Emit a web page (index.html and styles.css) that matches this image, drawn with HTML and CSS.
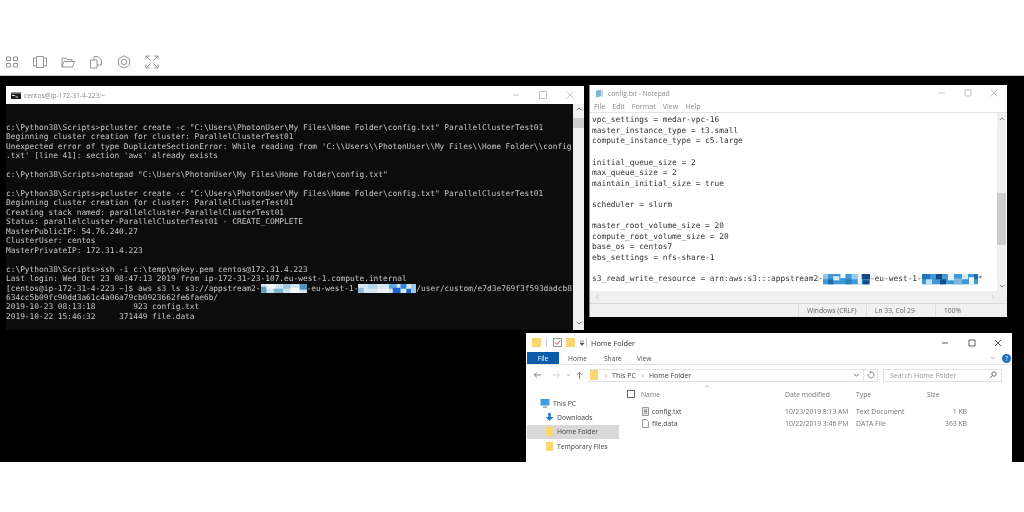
FILE: index.html
```html
<!DOCTYPE html>
<html lang="en">
<head>
<meta charset="utf-8">
<title>AppStream session</title>
<link rel="stylesheet" href="styles.css">
</head>
<body>
<svg class="defs" width="0" height="0" aria-hidden="true">
  <symbol id="r1" viewBox="0 0 50 10" preserveAspectRatio="none">
    <rect width="50" height="10" fill="#cfe4ee"/><rect x="0" y="3" width="6" height="7" fill="#5f9fc4"/><rect x="6" y="0" width="10" height="5" fill="#f2f7fa"/><rect x="14" y="5" width="10" height="5" fill="#7fb3d0"/><rect x="24" y="0" width="8" height="5" fill="#9cc6dc"/><rect x="32" y="4" width="10" height="6" fill="#f4f8fa"/><rect x="42" y="0" width="8" height="6" fill="#4f94c6"/>
  </symbol>
  <symbol id="r2" viewBox="0 0 60 10" preserveAspectRatio="none">
    <rect width="60" height="10" fill="#d6e7f0"/><rect x="0" y="4" width="6" height="6" fill="#8fbfda"/><rect x="10" y="0" width="10" height="5" fill="#b7d6e8"/><rect x="20" y="5" width="12" height="5" fill="#edf4f8"/><rect x="32" y="0" width="8" height="5" fill="#5aa4e0"/><rect x="36" y="4" width="8" height="6" fill="#1a63d6"/><rect x="44" y="0" width="6" height="5" fill="#2f86e0"/><rect x="50" y="5" width="5" height="5" fill="#1a63d6"/><rect x="55" y="0" width="5" height="10" fill="#9cc8ea"/>
  </symbol>
  <symbol id="r3" viewBox="0 0 46 10" preserveAspectRatio="none">
    <rect width="46" height="10" fill="#3f97d6"/><rect x="0" y="0" width="5" height="5" fill="#8cc4e6"/><rect x="5" y="5" width="5" height="5" fill="#1f6aa8"/><rect x="10" y="2" width="6" height="4" fill="#d5e9f5"/><rect x="17" y="0" width="5" height="4" fill="#e9f4fa"/><rect x="22" y="5" width="6" height="5" fill="#2a7fc0"/><rect x="28" y="0" width="6" height="5" fill="#9bcdea"/><rect x="34" y="0" width="4" height="10" fill="#e6f2f9"/><rect x="38" y="0" width="8" height="5" fill="#124a86"/><rect x="39" y="6" width="6" height="4" fill="#124a86"/>
  </symbol>
  <symbol id="r4" viewBox="0 0 56 10" preserveAspectRatio="none">
    <rect width="56" height="10" fill="#3f97d6"/><rect x="0" y="0" width="8" height="5" fill="#1f78bd"/><rect x="4" y="5" width="6" height="5" fill="#bfe0f2"/><rect x="14" y="0" width="6" height="5" fill="#124a86"/><rect x="18" y="5" width="6" height="5" fill="#154f8c"/><rect x="26" y="0" width="6" height="6" fill="#e4f1f8"/><rect x="32" y="4" width="8" height="6" fill="#7ab8de"/><rect x="40" y="0" width="6" height="5" fill="#d8ebf5"/><rect x="47" y="3" width="5" height="7" fill="#e9f4fa"/><rect x="52" y="0" width="4" height="5" fill="#1d70b4"/>
  </symbol>
</svg>

<header class="toolbar">
  <svg class="tool" viewBox="0 0 14 14"><path d="M1.500 2h4v3.500h-4zM8.500 2h4v3.500h-4zM1.500 8.500h4v3.500h-4zM8.500 8.500h4v3.500h-4z"/></svg>
  <svg class="tool" viewBox="0 0 14 14"><path d="M3.500 1.500h7v11h-7zM3.500 3H.5v8h3M10.500 3h3v8h-3"/></svg>
  <svg class="tool" viewBox="0 0 14 14"><path d="M1 12V3h4l1 1.500h5V6.500M1 12l2-5.500h10.500L11.500 12z"/></svg>
  <svg class="tool" viewBox="0 0 14 14"><path d="M1.500 5h6.500v8H1.500zM5 5V1.500h4l3.500 3.500v5H8"/></svg>
  <svg class="tool" viewBox="0 0 14 14"><path d="M7 .8l5.500 3.100v6.200L7 13.200l-5.500-3.100V3.900z"/><circle cx="7" cy="7" r="2.700"/></svg>
  <svg class="tool" viewBox="0 0 14 14"><path d="M1 1l4.500 4.500M13 1L8.500 5.500M1 13l4.500-4.500M13 13L8.500 8.500M1 4.500V1h3.500M9.500 1H13v3.500M1 9.500V13h3.500M13 9.500V13H9.500"/></svg>
</header>

<main class="desktop">
  <section class="window terminal">
    <div class="titlebar term-title">
      <svg class="cmd-icon" viewBox="0 0 10 7"><rect width="10" height="7" fill="#1c1c1c"/><rect width="10" height="1.500" fill="#9a9a9a"/><rect x="1" y="3" width="3" height="1" fill="#ddd"/><rect x="4.500" y="4.500" width="2.500" height="1" fill="#ddd"/></svg>
      <span class="title-text">centos@ip-172-31-4-223:~</span>
      <div class="controls faint">
        <svg viewBox="0 0 8 8"><path d="M1 4h6"/></svg>
        <svg viewBox="0 0 8 8"><path d="M.5.500h7v7h-7z"/></svg>
        <svg viewBox="0 0 8 8"><path d="M.5.500l7 7M7.500.500l-7 7"/></svg>
      </div>
    </div>
    <div class="term-body">
      <div class="console">
<pre class="block">c:\Python38\Scripts&gt;pcluster create -c "C:\Users\PhotonUser\My Files\Home Folder\config.txt" ParallelClusterTest01
Beginning cluster creation for cluster: ParallelClusterTest01
Unexpected error of type DuplicateSectionError: While reading from 'C:\\Users\\PhotonUser\\My Files\\Home Folder\\config
.txt' [line 41]: section 'aws' already exists

c:\Python38\Scripts&gt;notepad "C:\Users\PhotonUser\My Files\Home Folder\config.txt"

c:\Python38\Scripts&gt;pcluster create -c "C:\Users\PhotonUser\My Files\Home Folder\config.txt" ParallelClusterTest01
Beginning cluster creation for cluster: ParallelClusterTest01
Creating stack named: parallelcluster-ParallelClusterTest01
Status: parallelcluster-ParallelClusterTest01 - CREATE_COMPLETE
MasterPublicIP: 54.76.240.27
ClusterUser: centos
MasterPrivateIP: 172.31.4.223

c:\Python38\Scripts&gt;ssh -i c:\temp\mykey.pem centos@172.31.4.223
Last login: Wed Oct 23 08:47:13 2019 from ip-172-31-23-107.eu-west-1.compute.internal</pre>
<div class="redact-line"><span>[centos@ip-172-31-4-223 ~]$ aws s3 ls s3://appstream2-</span><svg class="redact rt1"><use href="#r1"/></svg><span>-eu-west-1-</span><svg class="redact rt2"><use href="#r2"/></svg><span>/user/custom/e7d3e769f3f593dadcb8</span></div>
<pre class="block">634cc5b09fc90dd3a61c4a06a79cb0923662fe6fae6b/
2019-10-23 08:13:18        923 config.txt
2019-10-22 15:46:32     371449 file.data</pre>
      </div>
      <div class="vscroll term-scroll">
        <svg class="arrow" viewBox="0 0 8 5"><path d="M1 4l3-3 3 3"/></svg>
        <div class="thumb term-thumb"></div>
        <svg class="arrow" viewBox="0 0 8 5"><path d="M1 1l3 3 3-3"/></svg>
      </div>
    </div>
  </section>

  <section class="window notepad">
    <div class="titlebar np-title">
      <svg class="np-icon" viewBox="0 0 10 10"><path d="M1 2l6-1.500V8L1 9.500z" fill="#7fb6d6"/><path d="M7 .5L9 2v7L7 8z" fill="#c9d6de"/></svg>
      <span class="title-text">config.txt - Notepad</span>
      <div class="controls faint np-controls">
        <svg viewBox="0 0 8 8"><path d="M1 4h6"/></svg>
        <svg viewBox="0 0 8 8"><path d="M1 1h6v6H1z"/></svg>
        <svg viewBox="0 0 8 8"><path d="M.5.500l7 7M7.500.500l-7 7"/></svg>
      </div>
    </div>
    <nav class="menu"><span>File</span><span>Edit</span><span>Format</span><span>View</span><span>Help</span></nav>
    <div class="np-body">
      <div class="np-text">
<pre class="block">vpc_settings = medar-vpc-16
master_instance_type = t3.small
compute_instance_type = c5.large

initial_queue_size = 2
max_queue_size = 2
maintain_initial_size = true

scheduler = slurm

master_root_volume_size = 20
compute_root_volume_size = 20
base_os = centos7
ebs_settings = nfs-share-1
 </pre>
<div class="redact-line"><span>s3_read_write_resource = arn:aws:s3:::appstream2-</span><svg class="redact rn1"><use href="#r3"/></svg><span>-eu-west-1-</span><svg class="redact rn2"><use href="#r4"/></svg><span>*</span></div>
      </div>
      <div class="vscroll np-scroll">
        <svg class="arrow" viewBox="0 0 8 5"><path d="M1 4l3-3 3 3"/></svg>
        <div class="thumb np-thumb"></div>
        <svg class="arrow" viewBox="0 0 8 5"><path d="M1 1l3 3 3-3"/></svg>
      </div>
    </div>
    <div class="hscroll">
      <svg class="harrow" viewBox="0 0 5 8"><path d="M4 1L1 4l3 3"/></svg>
      <svg class="harrow" viewBox="0 0 5 8"><path d="M1 1l3 3-3 3"/></svg>
    </div>
    <footer class="status">
      <span class="st st-eol">Windows (CRLF)</span>
      <span class="st st-pos">Ln 33, Col 29</span>
      <span class="st st-zoom">100%</span>
    </footer>
  </section>

  <section class="window explorer">
    <div class="ex-title">
      <svg class="fold" viewBox="0 0 9 9"><rect width="9" height="9" fill="#f7d774"/></svg>
      <span class="vsep"></span>
      <svg class="fold" viewBox="0 0 9 9"><rect x=".5" y=".5" width="8" height="8" fill="#fff" stroke="#999"/><path d="M2 4.500l2 2 3-4" fill="none" stroke="#c0504d"/></svg>
      <svg class="fold" viewBox="0 0 9 9"><rect width="9" height="9" fill="#f7d774"/></svg>
      <svg class="qa" viewBox="0 0 6 6"><path d="M1 1h4M1 3h4L3 5.500z" fill="#555" stroke="#555" stroke-width=".6"/></svg>
      <span class="vsep vsep-end"></span>
      <span class="ex-name">Home Folder</span>
      <div class="controls ex-controls">
        <svg viewBox="0 0 8 8"><path d="M1 4h6"/></svg>
        <svg viewBox="0 0 8 8"><path d="M1 1h6v6H1z"/></svg>
        <svg viewBox="0 0 8 8"><path d="M1 1l6 6M7 1L1 7"/></svg>
      </div>
    </div>
    <div class="ex-tabs">
      <span class="file-tab">File</span>
      <span class="tab tab-home">Home</span>
      <span class="tab tab-share">Share</span>
      <span class="tab tab-view">View</span>
      <svg class="ribbon-chev" viewBox="0 0 6 4"><path d="M1 1l2 2 2-2"/></svg>
      <span class="help">?</span>
    </div>
    <div class="ex-address">
      <svg class="nav-arrow dark" viewBox="0 0 10 8"><path d="M9 4H1.500M4.500 1L1.500 4l3 3"/></svg>
      <svg class="nav-arrow light" viewBox="0 0 10 8"><path d="M1 4h7.500M5.500 1l3 3-3 3"/></svg>
      <svg class="nav-small" viewBox="0 0 6 4"><path d="M1 1l2 2 2-2"/></svg>
      <svg class="nav-arrow dark up" viewBox="0 0 10 10"><path d="M5 9V1.500M2 4.500l3-3 3 3"/></svg>
      <div class="addr-box">
        <svg class="addr-folder" viewBox="0 0 8 10"><rect width="8" height="10" fill="#f7d774"/></svg>
        <span class="crumb-sep">›</span><span class="crumb">This PC</span>
        <span class="crumb-sep">›</span><span class="crumb">Home Folder</span>
        <svg class="addr-chev" viewBox="0 0 8 6"><path d="M1 1l3 3 3-3"/></svg>
      </div>
      <div class="refresh-box"><svg viewBox="0 0 8 8"><path d="M4 1a3 3 0 1 1-2.800 2M4 1L2.500 0M4 1L2.500 2.500"/></svg></div>
      <div class="search-box"><span>Search Home Folder</span><svg viewBox="0 0 8 8"><circle cx="5" cy="3" r="2.200"/><path d="M3.400 4.600L1 7"/></svg></div>
    </div>
    <div class="ex-main">
      <aside class="ex-nav">
        <div class="nav-item lvl1">
          <svg class="nav-icon" viewBox="0 0 10 9"><rect x=".5" y="0" width="9" height="6.500" fill="#3f9ddb"/><rect x="3" y="7.500" width="4" height="1.200" fill="#8a8a8a"/></svg>
          <span>This PC</span>
        </div>
        <div class="nav-item">
          <svg class="nav-icon" viewBox="0 0 10 10"><path d="M3.500 0h3v4.500H9.500L5 9 .5 4.500h3z" fill="#2f7fc6"/></svg>
          <span>Downloads</span>
        </div>
        <div class="nav-item selected">
          <svg class="nav-icon" viewBox="0 0 8 10"><rect width="8" height="10" fill="#f7d774"/></svg>
          <span>Home Folder</span>
        </div>
        <div class="nav-item">
          <svg class="nav-icon" viewBox="0 0 8 10"><rect width="8" height="10" fill="#f7d774"/></svg>
          <span>Temporary Files</span>
        </div>
      </aside>
      <div class="ex-list">
        <div class="sort-caret"><svg viewBox="0 0 6 3"><path d="M1 2.500l2-2 2 2"/></svg></div>
        <div class="list-row list-head">
          <span class="check"></span>
          <span class="col-name">Name</span>
          <span class="col-date">Date modified</span>
          <span class="col-type">Type</span>
          <span class="col-size head-size">Size</span>
        </div>
        <div class="list-row file">
          <svg class="doc" viewBox="0 0 7 9"><path d="M.5.500h6v8h-6z" fill="#e6e6e6" stroke="#999"/><path d="M2 3h3M2 4.500h3M2 6h3" stroke="#888"/></svg>
          <span class="col-name">config.txt</span>
          <span class="col-date">10/23/2019 8:13 AM</span>
          <span class="col-type">Text Document</span>
          <span class="col-size">1 KB</span>
        </div>
        <div class="list-row file">
          <svg class="doc" viewBox="0 0 7 9"><path d="M.5.500h4l2 2v6h-6z" fill="#fff" stroke="#999"/></svg>
          <span class="col-name">file.data</span>
          <span class="col-date">10/22/2019 3:46 PM</span>
          <span class="col-type">DATA File</span>
          <span class="col-size">363 KB</span>
        </div>
      </div>
    </div>
  </section>
</main>
<div class="bottom"></div>
</body>
</html>
```

FILE: styles.css
```css
* { box-sizing: border-box; }
html, body { margin: 0; padding: 0; }
body {
  width: 1024px;
  height: 512px;
  overflow: hidden;
  background: #fff;
  font-family: "Open Sans", "Noto Sans", sans-serif;
  display: flex;
  flex-direction: column;
}
.defs { position: absolute; }

/* Top toolbar */
.toolbar {
  height: 76px;
  flex: none;
  display: flex;
  align-items: center;
  gap: 14.2px;
  padding: 49px 0 0 4.500px;
  border-bottom: 1px solid #c8c8c8;
}
.tool {
  width: 14px;
  height: 14px;
  fill: none;
  stroke: #8b8b8b;
  stroke-width: .9;
  filter: blur(.3px);
}

/* Desktop */
.desktop {
  position: relative;
  height: 386px;
  flex: none;
  background: #000;
}
.bottom { flex: 1; background: #fff; }
.window { position: absolute; display: flex; flex-direction: column; overflow: hidden; filter: blur(.3px); }
.terminal { left: 6px; top: 10px; width: 578px; height: 244px; background: #0c0c0c; }
.notepad { left: 589px; top: 9px; width: 418px; height: 232px; background: #fff; border-left: 1px solid #8a8a8a; }
.explorer { left: 526px; top: 257px; width: 486px; height: 129px; background: #fff; }

.titlebar { display: flex; align-items: center; background: #fff; flex: none; }
.title-text { font-size: 6.700px; color: #8c8c8c; }
.controls { margin-left: auto; display: flex; }
.controls svg { width: 8px; height: 8px; fill: none; stroke: #8a8a8a; stroke-width: .7; }
.controls.faint svg { stroke: #aaa; }

/* Shared monospaced text */
.console, .np-text {
  flex: 1;
  min-width: 0;
  overflow: hidden;
  font-family: "DejaVu Sans Mono", "Liberation Mono", monospace;
  font-size: 7.840px;
}
.block { margin: 0; font: inherit; }
.redact-line { display: flex; white-space: pre; }
.redact { flex: none; display: block; }

/* Terminal */
.term-title { height: 18px; padding-left: 5px; gap: 3px; }
.cmd-icon { width: 10px; height: 7px; }
.term-title .controls { gap: 19px; padding-right: 10px; }
.term-body { flex: 1; display: flex; min-height: 0; }
.console {
  padding-top: 18.800px;
  line-height: 9.460px;
  color: #c8c8c8;
}
.console .block, .console .redact-line { line-height: 9.460px; }
.rt1 { width: 46px; height: 9.460px; }
.rt2 { width: 58px; height: 9.460px; }
.rn1 { width: 47px; height: 10.600px; }
.rn2 { width: 56px; height: 10.600px; }
.vscroll {
  flex: none;
  display: flex;
  flex-direction: column;
  align-items: center;
  background: #f0f0f0;
}
.arrow { width: 6px; height: 4px; fill: none; stroke: #555; stroke-width: 1; flex: none; }
.thumb { background: #cdcdcd; width: 100%; flex: none; }
.arrow:last-child { margin-top: auto; }
.term-scroll { width: 11px; padding: 3px 0 5px; }
.term-thumb { height: 10px; margin-top: 7px; }

/* Notepad */
.np-title { height: 15px; padding-left: 5px; gap: 4px; padding-top: 1px; }
.np-icon { width: 9px; height: 9px; }
.np-controls { gap: 18px; padding-right: 9px; }
.menu {
  height: 13px;
  flex: none;
  display: flex;
  align-items: center;
  padding-left: 4px;
  border-bottom: 1px solid #e4e4e4;
  font-size: 7.100px;
  color: #888;
  gap: 7px;
}
.np-body { flex: 1; display: flex; min-height: 0; }
.np-text {
  padding: 2.200px 0 0 2px;
  line-height: 10.600px;
  color: #333;
}
.np-scroll { width: 9px; margin-right: 1px; padding: 4px 0 3px; }
.np-thumb { height: 52px; margin-top: 72px; }
.hscroll {
  height: 12px;
  flex: none;
  display: flex;
  justify-content: space-between;
  align-items: center;
  background: #f0f0f0;
  padding: 0 12px 0 5px;
}
.harrow { width: 4px; height: 6px; fill: none; stroke: #bbb; stroke-width: 1; }
.status {
  height: 14px;
  flex: none;
  display: flex;
  align-items: center;
  background: #f0f0f0;
  border-top: 1px solid #d8d8d8;
  font-size: 6.700px;
  color: #666;
  padding-left: 208px;
}
.st { display: flex; align-items: center; height: 100%; border-left: 1px solid #dcdcdc; padding-left: 8px; }
.st-eol { width: 68px; }
.st-pos { width: 69px; }

/* Explorer */
.ex-title { height: 19px; flex: none; display: flex; align-items: center; padding: 0 0 0 6px; }
.fold { width: 9px; height: 9px; margin-right: 4px; flex: none; }
.vsep { width: 1px; height: 9px; background: #ccc; margin-right: 6px; margin-left: 1px; }
.vsep-end { margin-left: 0; margin-right: 4px; }
.qa { width: 6px; height: 6px; margin-right: 1px; }
.ex-name { font-size: 7.300px; color: #333; }
.ex-controls { gap: 18.500px; padding-right: 10px; }
.ex-controls svg { stroke: #333; stroke-width: .8; }

.ex-tabs {
  height: 13px;
  flex: none;
  display: flex;
  align-items: center;
  font-size: 6.700px;
  color: #555;
  border-bottom: 1px solid #e2e2e2;
  padding-left: 1px;
}
.file-tab {
  width: 32px;
  height: 100%;
  background: #0a5cab;
  color: #fff;
  display: flex;
  align-items: center;
  justify-content: center;
}
.tab-home { margin-left: 9px; }
.tab-share { margin-left: 17px; }
.tab-view { margin-left: 15px; }
.ribbon-chev { margin-left: auto; width: 6px; height: 4px; fill: none; stroke: #aaa; stroke-width: .8; margin-right: 6px; }
.help {
  width: 9px;
  height: 9px;
  border-radius: 50%;
  background: #1a6fc4;
  color: #fff;
  font-size: 7px;
  line-height: 9px;
  text-align: center;
  margin-right: 1px;
}
.ex-address {
  height: 20px;
  flex: none;
  display: flex;
  align-items: center;
  padding: 0 8px 0 7px;
  font-size: 7px;
  color: #555;
}
.nav-arrow { width: 9px; height: 8px; fill: none; stroke-width: .9; flex: none; }
.nav-arrow.dark { stroke: #666; }
.nav-arrow.light { stroke: #ccc; margin-left: 10px; }
.nav-arrow.up { height: 9px; }
.nav-small { width: 5px; height: 4px; fill: none; stroke: #888; stroke-width: .8; margin: 0 4px 0 5px; flex: none; }
.addr-box {
  width: 276px;
  height: 13px;
  margin-left: 4px;
  display: flex;
  align-items: center;
  gap: 5px;
  border: 1px solid #e2e2e2;
  border-left: 0;
  padding: 0 3px 0 2px;
  color: #444;
}
.addr-folder { width: 8px; height: 10px; margin-right: 1px; }
.crumb-sep { color: #888; margin-left: 1px; }
.addr-chev { margin-left: auto; width: 7px; height: 5px; fill: none; stroke: #555; stroke-width: 1; }
.refresh-box { width: 14px; height: 13px; display: flex; align-items: center; justify-content: center; border: 1px solid #e2e2e2; border-left: 0; }
.refresh-box svg { width: 8px; height: 8px; fill: none; stroke: #666; stroke-width: .8; }
.search-box {
  width: 119px;
  height: 13px;
  margin-left: 5px;
  display: flex;
  align-items: center;
  justify-content: space-between;
  padding: 0 4px 0 6px;
  border: 1px solid #e2e2e2;
  color: #999;
}
.search-box svg { width: 8px; height: 8px; fill: none; stroke: #666; stroke-width: .9; }

.ex-main { flex: 1; display: flex; min-height: 0; }
.ex-nav { width: 93px; flex: none; padding: 11px 0 0 1px; font-size: 6.800px; color: #444; }
.nav-item { height: 14.300px; display: flex; align-items: center; gap: 3px; padding-left: 18px; }
.nav-item .nav-icon { width: 9px; height: 9px; flex: none; }
.nav-item.lvl1 { padding-left: 13px; }
.nav-item.lvl1 .nav-icon { width: 10px; }
.selected { background: #d9d9d9; }
.ex-list { flex: 1; padding-left: 8px; font-size: 6.800px; color: #777; }
.sort-caret { height: 0; padding-left: 77px; }
.sort-caret svg { width: 6px; height: 3px; fill: none; stroke: #aaa; stroke-width: .8; display: block; }
.list-row { display: grid; align-items: center; }
.list-head { grid-template-columns: 14px 144px 71px 71px 40px; height: 14px; padding-top: 4px; margin-bottom: 6px; }
.file { grid-template-columns: 25px 133px 71px 71px 40px; height: 12px; }
.check { width: 8px; height: 8px; border: 1px solid #666; }
.doc { width: 7px; height: 9px; margin-left: 15px; }
.file .col-name { color: #444; }
.col-size { text-align: right; }
.head-size { text-align: left; }
```
